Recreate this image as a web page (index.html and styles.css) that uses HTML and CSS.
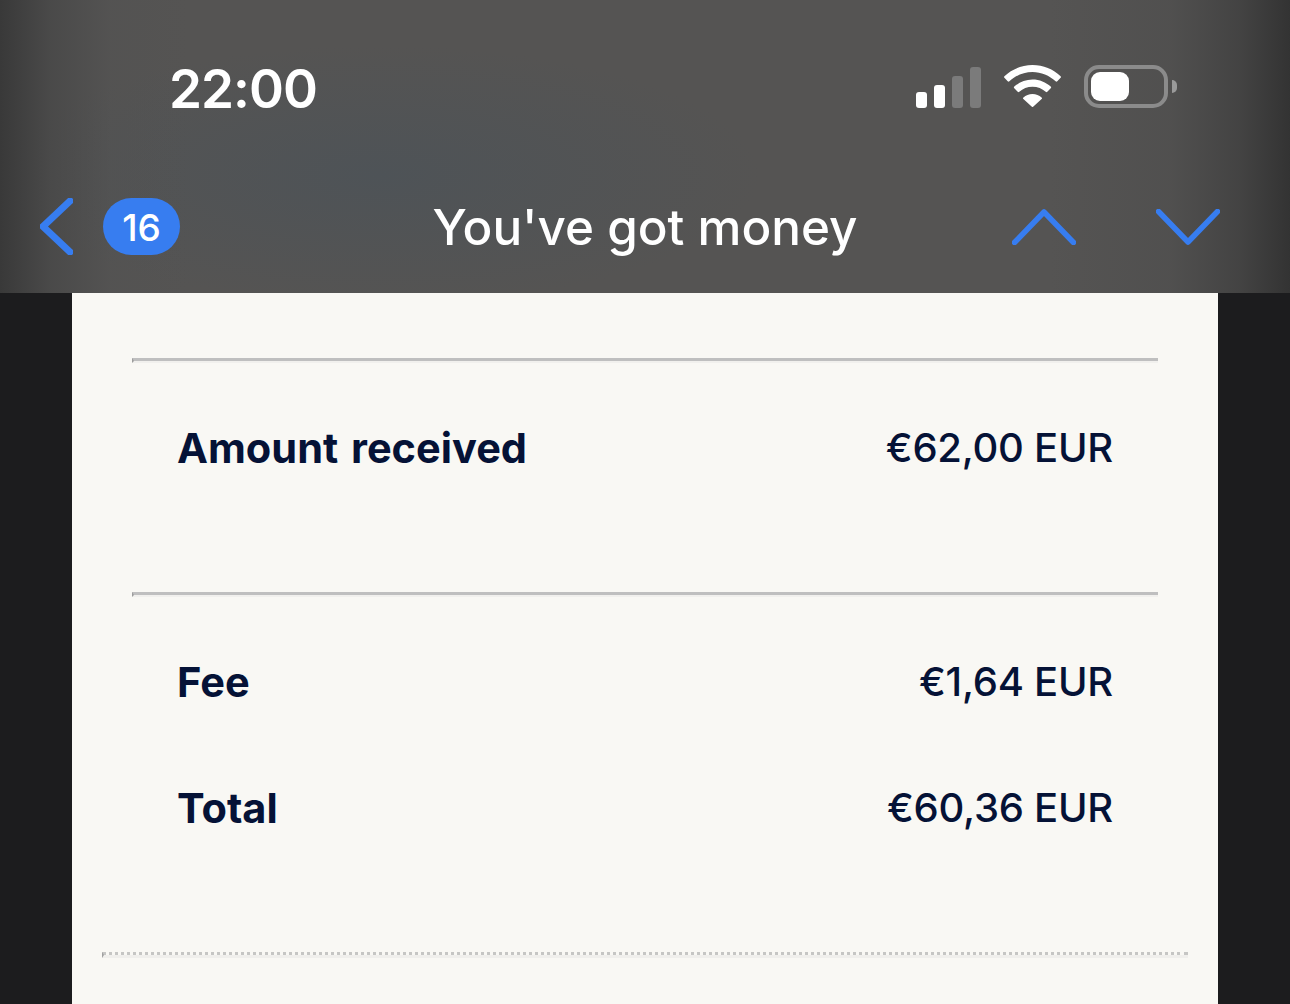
FILE: index.html
```html
<!DOCTYPE html>
<html lang="en">
<head>
<meta charset="utf-8">
<title>You've got money</title>
<link rel="stylesheet" href="styles.css">
</head>
<body>
<div class="screen">
  <header class="top">
    <div class="status">
      <span class="time">22:00</span>
      <div class="status-icons">
        <div class="signal">
          <i class="bar b1"></i><i class="bar b2"></i><i class="bar b3 dim"></i><i class="bar b4 dim"></i>
        </div>
        <svg class="wifi" viewBox="0 0 57 42" aria-hidden="true">
          <path fill="#fff" d="M28.5 0C17.6 0 7.8 4.2 0.4 11.2a1.2 1.2 0 0 0 0 1.6l3.3 3.5a1.2 1.2 0 0 0 1.7 0C11.6 10.500 19.700 7 28.500 7s16.900 3.500 23.100 9.300a1.200 1.200 0 0 0 1.700 0l3.300-3.500a1.200 1.200 0 0 0 0-1.600C49.200 4.200 39.400 0 28.500 0z"/>
          <path fill="#fff" d="M28.500 14.500c-7 0-13.400 2.700-18.200 7.100a1.200 1.200 0 0 0 0 1.700l3.400 3.500a1.200 1.200 0 0 0 1.600 0c3.500-3.100 8.100-5 13.200-5s9.700 1.900 13.200 5a1.200 1.200 0 0 0 1.600 0l3.400-3.500a1.200 1.200 0 0 0 0-1.700C41.900 17.200 35.500 14.500 28.500 14.500z"/>
          <path fill="#fff" d="M28.500 29c-3.500 0-6.700 1.300-9.100 3.400a1.200 1.200 0 0 0 0 1.700l8.200 7.500a1.300 1.300 0 0 0 1.800 0l8.200-7.500a1.200 1.200 0 0 0 0-1.700C35.200 30.300 32 29 28.500 29z"/>
        </svg>
        <div class="battery">
          <div class="battery-body"><div class="battery-fill"></div></div>
          <div class="battery-nub"></div>
        </div>
      </div>
    </div>
    <nav class="nav">
      <div class="nav-left">
        <svg class="back" viewBox="0 0 33 57" aria-hidden="true"><path d="M30 3 3 28.500 30 54"/></svg>
        <span class="badge">16</span>
      </div>
      <h1 class="title">You've got money</h1>
      <div class="nav-right">
        <svg class="arrow" viewBox="0 0 64 36" aria-hidden="true"><path d="M2.500 33.500 32 3l29.500 30.500"/></svg>
        <svg class="arrow" viewBox="0 0 64 36" aria-hidden="true"><path d="M2.500 2.500 32 33 61.500 2.500"/></svg>
      </div>
    </nav>
  </header>
  <main class="card">
    <hr class="rule first">
    <div class="row amount"><span class="label">Amount received</span><span class="value">€62,00 EUR</span></div>
    <hr class="rule">
    <div class="row fee"><span class="label">Fee</span><span class="value">€1,64 EUR</span></div>
    <div class="row total"><span class="label">Total</span><span class="value">€60,36 EUR</span></div>
    <hr class="dots">
  </main>
</div>
</body>
</html>
```

FILE: styles.css
```css
* { box-sizing: border-box; }
html, body { margin: 0; padding: 0; }
body { background: #1c1c1e; font-family: Inter, "Liberation Sans", sans-serif; }

.screen {
  width: 1290px;
  height: 1004px;
  overflow: hidden;
  background: #1c1c1e;
  display: flex;
  flex-direction: column;
}

.top {
  height: 293px;
  flex: none;
  color: #fff;
  padding-top: 65px;
  background:
    linear-gradient(90deg, #393939 0, rgba(70,70,70,.75) 50px, rgba(80,80,80,.3) 110px, rgba(85,85,85,0) 190px),
    linear-gradient(270deg, #333 0, rgba(60,60,60,.7) 50px, rgba(72,72,72,.35) 120px, rgba(85,85,85,0) 240px),
    radial-gradient(ellipse 380px 130px at 380px 175px, #4e5357 0, rgba(80,84,88,0) 100%),
    #555453;
}

.status {
  height: 44px;
  padding: 0 113px 0 169px;
  display: flex;
  align-items: center;
  justify-content: space-between;
}
.time { font-size: 53px; font-weight: 600; line-height: 44px; letter-spacing: -1px; padding-top: 4px; }
.status-icons { display: flex; align-items: flex-start; gap: 23px; height: 44px; }

.signal { display: flex; align-items: flex-end; gap: 7px; height: 42px; margin-top: 1px; }
.bar { display: block; width: 11px; background: #fff; border-radius: 3px; }
.bar.dim { background: #7b7b7b; }
.b1 { height: 16px; }
.b2 { height: 23px; }
.b3 { height: 32px; }
.b4 { height: 41px; }

.wifi { width: 57px; height: 42px; display: block; }

.battery { display: flex; align-items: center; gap: 4px; height: 43px; }
.battery-body {
  width: 84px;
  height: 43px;
  border: 4px solid #8b8b8b;
  border-radius: 15px;
  padding: 3px;
}
.battery-fill { width: 38px; height: 29px; background: #fff; border-radius: 9px; }
.battery-nub { width: 5px; height: 13px; background: #9a9a9a; border-radius: 0 6px 6px 0; }

.nav {
  margin-top: 89px;
  height: 57px;
  padding: 0 40px;
  display: grid;
  grid-template-columns: 1fr auto 1fr;
  align-items: center;
}
.nav-left { display: flex; align-items: center; gap: 30px; }
.back { width: 33px; height: 57px; display: block; }
.back path, .arrow path {
  fill: none;
  stroke: #377df0;
  stroke-linecap: round;
  stroke-linejoin: round;
}
.back path { stroke-width: 7; }
.arrow path { stroke-width: 5.500; }
.badge {
  width: 77px;
  height: 57px;
  border-radius: 28.500px;
  background: #377df0;
  font-size: 37px;
  font-weight: 450;
  line-height: 59px;
  text-align: center;
  color: #fff;
}
.title { margin: 0; font-size: 49.400px; font-weight: 500; line-height: 59px; height: 57px; white-space: nowrap; }
.nav-right { display: flex; justify-content: flex-end; gap: 80px; align-items: center; margin-right: 30px; }
.arrow { width: 64px; height: 36px; display: block; }

.card {
  flex: 1;
  margin: 0 72px;
  background: #f9f8f4;
  padding: 65px 60px 0;
  color: #051236;
}

.rule {
  display: block;
  margin: 0;
  height: 5px;
  border: 0;
  border-top: 3px solid #bfbfbf;
  border-bottom: 2px solid #f1f0ed;
  border-left: 2px solid #9d9d9d;
}
.dots {
  display: block;
  margin: 119px -30px 0;
  height: 6px;
  border: 0;
  border-top: 3px dotted #c6c6c4;
  border-bottom: 3px solid #f0efec;
  border-left: 2px solid #a0a0a0;
}

.row {
  display: flex;
  justify-content: space-between;
  align-items: center;
  height: 50px;
  padding: 0 45px;
  font-size: 40px;
  line-height: 50px;
}
.label { font-weight: 700; font-size: 41.500px; word-spacing: 3px; }
.value { font-weight: 450; letter-spacing: -0.250px; }
.amount { margin: 60px 0 119px; }
.fee { margin-top: 60px; }
.total { margin-top: 76px; }
```
